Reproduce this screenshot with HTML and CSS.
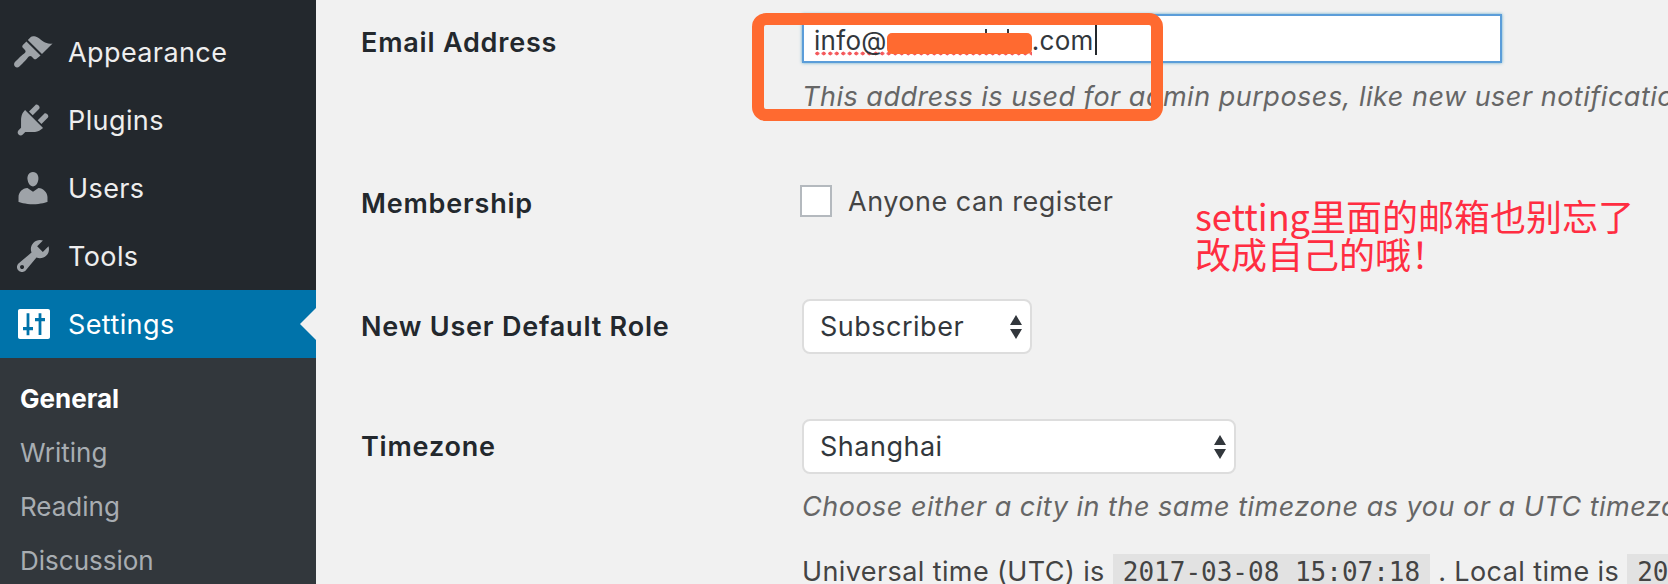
FILE: index.html
```html
<!DOCTYPE html>
<html lang="en">
<head>
<meta charset="UTF-8">
<meta name="viewport" content="width=device-width, initial-scale=1.0">
<title>General Settings</title>
<link rel="stylesheet" href="styles.css">
</head>
<body>
    <div class="page">
        <nav class="sidebar">
            <a class="menu-item">
                <svg class="menu-icon" viewBox="0 0 20 20"><path d="M14.48 11.06L7.41 3.99l1.5-1.5c.5-.56 2.3-.47 3.51.32 1.21.8 1.43 1.28 2.91 2.1 1.18.64 2.45 1.26 4.45.85zm-.71.71L6.7 4.7 4.93 6.47c-.39.39-.39 1.02 0 1.41l1.06 1.06c.39.39.39 1.03 0 1.42-.6.6-1.54 1.24-2.1 1.8-.7.7-2.3 2.2-2.9 2.9-.6.7-.6 1.6 0 2.2.6.6 1.5.6 2.2 0 .7-.6 2.2-2.2 2.9-2.9.56-.56 1.2-1.5 1.8-2.1.39-.39 1.03-.39 1.42 0l1.06 1.06c.39.39 1.02.39 1.41 0z"/></svg>
                Appearance
            </a>
            <a class="menu-item">
                <svg class="menu-icon" viewBox="0 0 20 20"><path d="M13.11 4.36L9.87 7.6 8 5.73l3.24-3.24c.35-.34 1.05-.2 1.56.32.52.51.66 1.21.31 1.55zm-8 1.77l.91-1.12 9.01 9.01-1.19.84c-.71.71-2.63 1.16-3.82 1.16H6.14L4.9 17.26c-.59.59-1.54.59-2.12 0-.59-.58-.59-1.53 0-2.12l1.24-1.24v-3.88c0-1.13.4-3.19 1.09-3.89zm7.26 3.97l3.24-3.24c.34-.35 1.04-.21 1.55.31.52.51.66 1.21.31 1.55l-3.24 3.25z"/></svg>
                Plugins
            </a>
            <a class="menu-item">
                <svg class="menu-icon" viewBox="0 0 20 20"><path d="M10 9.25c-2.27 0-2.73-3.44-2.73-3.44C7 4.02 7.82 2 9.97 2c2.16 0 2.98 2.02 2.71 3.81 0 0-.41 3.44-2.68 3.44zm0 2.57L12.72 10c2.39 0 4.52 2.33 4.52 4.53v2.49s-3.65 1.13-7.24 1.13c-3.65 0-7.24-1.13-7.24-1.13v-2.49c0-2.25 1.94-4.48 4.47-4.48z"/></svg>
                Users
            </a>
            <a class="menu-item">
                <svg class="menu-icon" viewBox="0 0 20 20"><path d="M16.68 9.77c-1.34 1.34-3.3 1.67-4.95.99l-5.41 6.52c-.99.99-2.59.99-3.58 0s-.99-2.59 0-3.57l6.52-5.42c-.68-1.65-.35-3.61.99-4.95 1.28-1.28 3.12-1.62 4.72-1.06l-2.89 2.89 2.82 2.82 2.86-2.87c.53 1.58.18 3.39-1.08 4.65zM3.81 16.21c.4.39 1.04.39 1.43 0 .4-.4.4-1.04 0-1.43-.39-.4-1.03-.4-1.43 0-.39.39-.39 1.03 0 1.43z"/></svg>
                Tools
            </a>
            <a class="menu-item current">
                <svg class="menu-icon" viewBox="0 0 20 20"><path fill-rule="evenodd" d="M3.500 2.500h14c.6 0 1 .4 1 1v13c0 .6-.4 1-1 1h-14c-.6 0-1-.4-1-1v-13c0-.6.4-1 1-1zm3.300 2.100v6.900H5v1.600h1.800v2.500h1.400v-2.500H10v-1.600H8.200V4.600zm6 0v2.400H11v1.600h1.800v6.900h1.400V8.600H16V7h-1.800V4.600z"/></svg>
                Settings
            </a>
            <div class="submenu">
                <a class="sub-item active">General</a>
                <a class="sub-item">Writing</a>
                <a class="sub-item">Reading</a>
                <a class="sub-item">Discussion</a>
            </div>
        </nav>

        <main class="content">
            <div class="form-row row-email">
                <div class="form-label">Email Address</div>
                <div class="form-field">
                    <div class="text-input"><span class="typed">info@<span class="redacted"></span></span>.com<span class="caret"></span></div>
                    <p class="description">This address is used for admin purposes, like new user notification.</p>
                </div>
            </div>

            <div class="form-row row-member">
                <div class="form-label">Membership</div>
                <div class="form-field check-line">
                    <span class="checkbox"></span>
                    Anyone can register
                </div>
            </div>

            <div class="form-row row-role">
                <div class="form-label">New User Default Role</div>
                <div class="form-field">
                    <div class="select-box select-role">Subscriber<span class="arrows"></span></div>
                </div>
            </div>

            <div class="form-row row-zone">
                <div class="form-label">Timezone</div>
                <div class="form-field">
                    <div class="select-box select-zone">Shanghai<span class="arrows"></span></div>
                    <p class="description zone-help">Choose either a city in the same timezone as you or a UTC timezone offset.</p>
                    <p class="time-line">Universal time (UTC) is <code>2017-03-08 15:07:18</code> . Local time is <code>2017-03-08 23:07:18</code></p>
                </div>
            </div>
        </main>
    </div>

    <!-- screenshot annotations -->
    <div class="mark-box"></div>
    <div class="note">setting里面的邮箱也别忘了<br>改成自己的哦！</div>
</body>
</html>
```

FILE: styles.css
```css
body, html {
    height: 100%;
    margin: 0;
    padding: 0;
    overflow: hidden;
}

body {
    position: relative;
    font-family: "Inter", "Liberation Sans", sans-serif;
    background-color: #f1f1f1;
}

.page {
    display: flex;
    height: 584px;
    overflow: hidden;
}

/* SIDEBAR */
.sidebar {
    flex: 0 0 316px;
    padding-top: 18px;
    background-color: #23282d;
}

.menu-item {
    position: relative;
    display: flex;
    align-items: center;
    gap: 15px;
    height: 68px;
    padding-left: 13px;
    font-size: 27px;
    letter-spacing: 0.4px;
    color: #eee;
}

.menu-icon {
    width: 40px;
    height: 40px;
    fill: #9ea3a8;
    flex: none;
}

.menu-item.current {
    background-color: #0073aa;
    color: #fff;
}

.menu-item.current .menu-icon {
    fill: #fff;
}

.menu-item.current::after {
    content: "";
    position: absolute;
    right: 0;
    top: 18px;
    border: 16px solid transparent;
    border-left: 0;
    border-right-color: #f1f1f1;
}

.submenu {
    display: flex;
    flex-direction: column;
    height: 226px;
    padding-top: 13px;
    box-sizing: border-box;
    background-color: #32373c;
}

.sub-item {
    display: flex;
    align-items: center;
    flex: 0 0 54px;
    padding-left: 20px;
    font-size: 26px;
    color: #a8adb2;
}

.sub-item.active {
    font-weight: 700;
    color: #fff;
}

/* FORM */
.content {
    flex: 1;
    min-width: 0;
    padding-left: 45px;
    white-space: nowrap;
}

.form-row {
    display: grid;
    grid-template-columns: 441px 1fr;
}

.row-email { padding-top: 14px; }
.row-member { padding-top: 69px; }
.row-role { padding-top: 79px; }
.row-zone { padding-top: 65px; }

.form-label {
    font-size: 27px;
    font-weight: 600;
    letter-spacing: 0.8px;
    color: #23282d;
}

.row-email .form-label { padding-top: 12px; }
.row-member .form-label { padding-top: 5px; }
.row-role .form-label { padding-top: 11px; }
.row-zone .form-label { padding-top: 11px; }

.form-field {
    font-size: 27px;
    letter-spacing: 0.5px;
    color: #444;
}

.text-input {
    display: flex;
    align-items: center;
    box-sizing: border-box;
    width: 700px;
    height: 49px;
    padding: 3px 0 0 10px;
    background-color: #fff;
    border: 2px solid #5b9dd9;
    box-shadow: 0 0 3px rgba(30, 140, 190, 0.7);
    font-size: 26px;
    letter-spacing: 0.3px;
    color: #32373c;
}

.typed {
    display: inline-flex;
    align-items: center;
    height: 32px;
    background-image: radial-gradient(circle, #f4595c 1.8px, transparent 2.2px);
    background-size: 6.5px 5px;
    background-position: 0 bottom;
    background-repeat: repeat-x;
}

.redacted {
    position: relative;
    display: inline-block;
    width: 145px;
    height: 21px;
    margin-top: 6px;
    border-radius: 5px;
    background-color: #ff6a30;
}

/* tops of the letters that stick out above the marker */
.redacted::before,
.redacted::after {
    content: "";
    position: absolute;
    top: -4px;
    width: 2px;
    height: 4px;
    background-color: #32373c;
}

.redacted::before { left: 98px; }
.redacted::after { left: 120px; }

.caret {
    display: inline-block;
    width: 2px;
    height: 30px;
    margin-left: 1px;
    background-color: #23282d;
}

.description {
    margin: 17px 0 0;
    font-style: italic;
    color: #666;
}

.zone-help {
    margin-top: 16px;
}

.check-line {
    display: flex;
    align-items: center;
    gap: 16px;
    margin-left: -2px;
}

.checkbox {
    box-sizing: border-box;
    width: 32px;
    height: 32px;
    background-color: #fff;
    border: 2px solid #b4b9be;
}

.select-box {
    display: flex;
    align-items: center;
    justify-content: space-between;
    box-sizing: border-box;
    height: 55px;
    padding: 0 8px 0 16px;
    background-color: #fff;
    border: 2px solid #ddd;
    border-radius: 8px;
    color: #32373c;
}

.select-role { width: 230px; }
.select-zone { width: 434px; }

.arrows {
    display: flex;
    flex-direction: column;
    gap: 4px;
}

.arrows::before,
.arrows::after {
    content: "";
    border-left: 6px solid transparent;
    border-right: 6px solid transparent;
}

.arrows::before { border-bottom: 10px solid #32373c; }
.arrows::after { border-top: 10px solid #32373c; }

.time-line {
    margin: 31px 0 0;
    letter-spacing: 0.4px;
    color: #444;
}

code {
    display: inline-block;
    padding: 3px 10px 2px;
    font-family: "DejaVu Sans Mono", "Liberation Mono", monospace;
    font-size: 26px;
    letter-spacing: 0;
    background-color: #e2e2e2;
    color: #444;
}

/* ANNOTATIONS */
.mark-box {
    position: absolute;
    left: 752px;
    top: 13px;
    box-sizing: border-box;
    width: 411px;
    height: 108px;
    border: 12px solid #ff6a30;
    border-radius: 14px;
}

.note {
    position: absolute;
    left: 1195px;
    top: 196px;
    font-family: "Noto Sans CJK SC", "Inter", sans-serif;
    font-size: 36px;
    line-height: 38px;
    color: #ff2d41;
    white-space: nowrap;
}
```
